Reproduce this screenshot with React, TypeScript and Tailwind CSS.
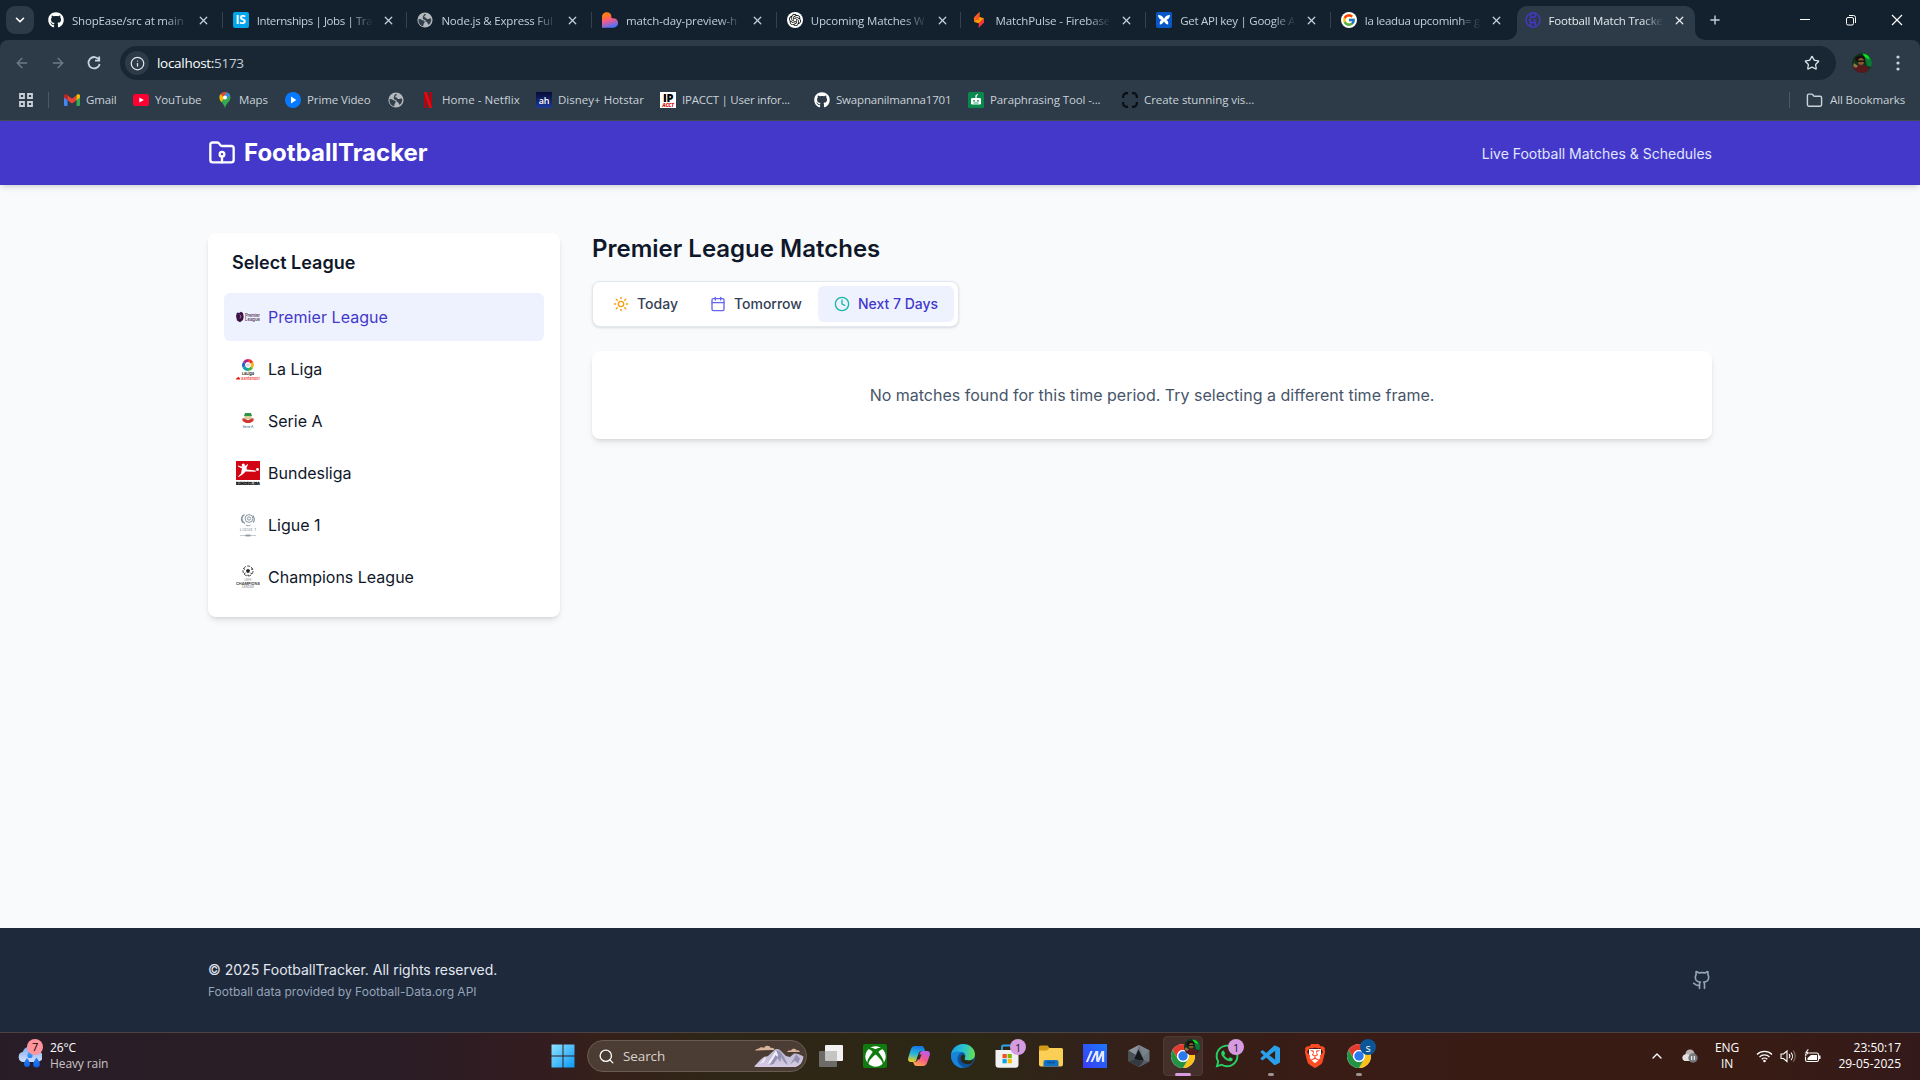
import React from "react";
import {
  FolderRoot,
  Sun,
  Calendar,
  Clock,
  Github,
  ChevronDown,
  X,
  Plus,
  ArrowLeft,
  ArrowRight,
  Info,
  Star,
  Folder,
  Search,
  ChevronUp,
} from "lucide-react";
import { FaGithub, FaXbox, FaWhatsapp } from "react-icons/fa";
import { FcGoogle } from "react-icons/fc";
import { SiOpenai, SiBrave } from "react-icons/si";
import { VscVscode } from "react-icons/vsc";

/* ---------- small drawings ---------- */

const Globe = () => (
  <svg viewBox="0 0 16 16" className="h-4 w-4">
    <circle cx="8" cy="8" r="7.6" fill="#b4b8bc" />
    <path d="M1.600 7C4 6.500 5 8 6.500 8.500c1.600.6 1.400 2 .4 2.900-.6.700-.3 1.900-.9 3A6.800 6.800 0 0 1 1.600 7zM8 1.700c1.500.8.5 1.600-.3 2-.8.500-.6 1.500.5 1.700 1.500.2 1 1.700 2.600 1.700 1.200 0 1.500-.8 3.300-.4a6.500 6.500 0 0 1-2.300 6c-1.300-.2-.8-2-2-2.600C8.500 9.500 8 8.800 8.500 7.900 6.500 8 5.500 6.800 5.800 5.500 6 4 6.500 2.500 8 1.700z" fill="#33404c" />
  </svg>
);

const Internshala = () => (
  <div className="flex h-4 w-4 items-center justify-center rounded-[2px] bg-[#00a5ec] text-[12px] font-bold leading-none text-white">IS</div>
);

const Lovable = () => (
  <svg viewBox="0 0 16 16" className="h-4 w-4">
    <defs>
      <linearGradient id="lov" x1="0.2" y1="0" x2="0.5" y2="1">
        <stop offset="0.2" stopColor="#ff7a1a" />
        <stop offset="0.5" stopColor="#ff5a80" />
        <stop offset="1" stopColor="#4b73ff" />
      </linearGradient>
    </defs>
    <path d="M4.800.3C7.500.3 9.500 2.300 9.500 5v1.200h1.800a4.700 4.700 0 0 1 0 9.500H0V5C0 2.300 2.100.3 4.800.3z" fill="url(#lov)" />
  </svg>
);

const OpenAi = () => (
  <div className="flex h-4 w-4 items-center justify-center rounded-full bg-white">
    <SiOpenai className="h-3 w-3 text-black" />
  </div>
);

const FirebaseStudio = () => (
  <svg viewBox="0 0 16 16" className="h-4 w-4">
    <path d="M8.500 0 3 5.500V10l5.500-5z" fill="#ff7a1a" />
    <path d="M8.500 5 3 10l5 1.200 5-5z" fill="#ffa000" />
    <path d="m3 5.500 5 3V4.500L8.500 0z" fill="#ff5226" />
    <path d="m8 11.200 5-5v4.300L7.500 16z" fill="#ff3340" />
  </svg>
);

const ApiKey = () => (
  <svg viewBox="0 0 16 16" className="h-4 w-4">
    <rect width="16" height="16" rx="2" fill="#0757c9" />
    <path d="M2 3c3 0 5 1.500 6 4 1-2.500 3-4 6-4-.2 2.600-1.500 4.400-3.800 5 1.700.5 2.300 2 2 4.500-2-.3-3.500-1.400-4.200-3.300-.7 1.900-2.200 3-4.200 3.300-.3-2.500.3-4 2-4.500C3.500 7.400 2.200 5.600 2 3z" fill="#fff" />
  </svg>
);

const GoogleDisc = () => (
  <div className="flex h-4 w-4 items-center justify-center rounded-full bg-white">
    <FcGoogle className="h-[14px] w-[14px]" />
  </div>
);

const BallIcon = () => (
  <svg viewBox="0 0 16 16" className="h-4 w-4" fill="none" stroke="#4636cf" strokeWidth="1.300">
    <circle cx="8" cy="8" r="7" />
    <path d="M5.500 2.200 6 5h4l.5-2.800M6 5 4.500 8 6 10.500h4V8.500L8.500 7M6 10.500l-.8 3.300M10 10.500l.8 3.300" />
  </svg>
);

const Gmail = () => (
  <svg viewBox="0 0 16 12" className="h-3 w-4">
    <path d="M0 1.500V11a1 1 0 0 0 1 1h2.500V4z" fill="#4285f4" />
    <path d="M16 1.500V11a1 1 0 0 1-1 1h-2.500V4z" fill="#34a853" />
    <path d="M3.500 1.200v5L8 9.500l4.500-3.300v-5L8 4.700z" fill="#ea4335" />
    <path d="M0 1.700v1.900l3.500 2.600v-5L2.800.6C1.600-.3 0 .5 0 1.700z" fill="#c5221f" />
    <path d="M16 1.700v1.900l-3.500 2.600v-5l.7-.6C14.400-.3 16 .5 16 1.700z" fill="#fbbc04" />
  </svg>
);

const YouTube = () => (
  <svg viewBox="0 0 16 12" className="h-3 w-4">
    <rect width="16" height="12" rx="2.800" fill="#ff0033" />
    <path d="M6.300 3.400v5.200L10.800 6z" fill="#fff" />
  </svg>
);

const MapsPin = () => (
  <svg viewBox="0 0 12 16" className="h-4 w-3">
    <path d="M6 0a5.500 5.500 0 0 1 5.500 5.500C11.500 9.500 7.500 10.500 6 16 4.500 10.500.5 9.500.5 5.500A5.500 5.500 0 0 1 6 0z" fill="#34a853" />
    <path d="M1.800 2 6 5.500 2.300 10C1.200 8.700.5 7.500.5 5.500.5 4.100 1 3 1.800 2z" fill="#fbbc04" />
    <path d="M1.800 2A5.500 5.500 0 0 1 6 0c1 0 1.400.2 1.800.3L4 5z" fill="#ea4335" />
    <path d="M7.800.3a5.600 5.600 0 0 1 3.200 3L7.500 7 6 4z" fill="#4285f4" />
    <circle cx="6" cy="5.500" r="2" fill="#fff" />
  </svg>
);

const PrimeVideo = () => (
  <svg viewBox="0 0 16 16" className="h-4 w-4">
    <circle cx="8" cy="8" r="8" fill="#0779ff" />
    <path d="M6 4.600v6.800L11.300 8z" fill="#fff" />
  </svg>
);

const Netflix = () => (
  <svg viewBox="0 0 16 16" className="h-4 w-4">
    <path d="M4 0h2.800v16H4zM9.200 0H12v16H9.200z" fill="#b1060f" />
    <path d="M4 0h2.800L12 16H9.200z" fill="#e50914" />
  </svg>
);

const Hotstar = () => (
  <div className="flex h-4 w-4 items-center justify-center bg-linear-to-b from-[#060b34] to-[#1b3c9c] text-[9px] font-semibold leading-none tracking-[-0.300px] text-white">ah</div>
);

const IpAcct = () => (
  <div className="flex h-4 w-4 flex-col items-center bg-white">
    <span className="text-[11px] font-black leading-[11px] tracking-[-0.5px] text-black">IP</span>
    <span className="text-[5px] font-black italic leading-[5px] text-[#e01010]">ACCT</span>
  </div>
);

const QuillBot = () => (
  <svg viewBox="0 0 16 16" className="h-4 w-4">
    <rect width="16" height="16" rx="1.500" fill="#07884d" />
    <path d="M7.400 6V3.500L9.600 1.800l.4 1-1.300 1.200V6z" fill="#fff" />
    <rect x="3" y="6" width="10" height="6.500" rx="1.200" fill="#fff" />
    <circle cx="6" cy="8.800" r=".9" fill="#07884d" />
    <circle cx="10" cy="8.800" r=".9" fill="#07884d" />
    <path d="M5.500 11h5" stroke="#07884d" strokeWidth=".8" />
  </svg>
);

const Brackets = () => (
  <svg viewBox="0 0 16 16" className="h-4 w-4" fill="none" stroke="#0b0d10" strokeWidth="2.200">
    <path d="M6 1.200H4.500A3.300 3.300 0 0 0 1.200 4.500V6M10 1.200h1.500a3.300 3.300 0 0 1 3.300 3.300V6M6 14.800H4.500a3.300 3.300 0 0 1-3.300-3.300V10M10 14.800h1.500a3.300 3.300 0 0 0 3.300-3.300V10" />
  </svg>
);

const Avatar = ({ className }: { className: string }) => (
  <svg viewBox="0 0 20 20" className={className}>
    <clipPath id="av"><circle cx="10" cy="10" r="10" /></clipPath>
    <g clipPath="url(#av)">
      <rect width="20" height="20" fill="#12301c" />
      <path d="M10 0h10v14l-5-1-2-8z" fill="#0b7a35" />
      <path d="M11 1.500c3-1 6 1.500 6.500 5l-4-2z" fill="#0bea1d" />
      <path d="M3 6c0-4 9-5 10-1l-1 3H4z" fill="#15100f" />
      <ellipse cx="9" cy="8.500" rx="3" ry="3.500" fill="#8a5a2c" />
      <path d="M5 7.500h8v1.400H5z" fill="#17110f" />
      <path d="M0 14c5-3 13-3 17 1l-2 5H2z" fill="#571a1c" />
      <path d="m2 10 4 3-2 2-3-2z" fill="#8b7a43" />
    </g>
  </svg>
);

const Chrome = () => (
  <svg viewBox="0 0 24 24" className="h-6 w-6">
    <circle cx="12" cy="12" r="12" fill="#fff" />
    <path d="M1.610 6A12 12 0 0 1 22.390 6H12a6 6 0 0 0-5.200 9z" fill="#e33b2e" />
    <path d="M22.390 6A12 12 0 0 1 12 24l5.200-9A6 6 0 0 0 12 6z" fill="#fbc116" />
    <path d="M12 24A12 12 0 0 1 1.610 6l5.190 9A6 6 0 0 0 17.200 15z" fill="#229342" />
    <circle cx="12" cy="12" r="5.900" fill="#fff" />
    <circle cx="12" cy="12" r="4.700" fill="#2b79ee" />
  </svg>
);

const Windows = () => (
  <svg viewBox="0 0 24 24" className="h-6 w-6">
    <defs>
      <linearGradient id="win" x1="0" y1="0" x2="1" y2="1">
        <stop offset="0" stopColor="#8fe3ff" />
        <stop offset="1" stopColor="#0a99f5" />
      </linearGradient>
    </defs>
    <path d="M.5.500h11v11H.5zM12.500.500h11v11h-11zM.5 12.500h11v11H.5zM12.500 12.500h11v11h-11z" fill="url(#win)" />
  </svg>
);

const Mountains = () => (
  <svg viewBox="0 0 50 24" className="h-6 w-[50px]">
    <defs>
      <linearGradient id="mt" x1="0" y1="0" x2="0" y2="1">
        <stop offset="0" stopColor="#b3b5ca" />
        <stop offset="1" stopColor="#d9cbe6" />
      </linearGradient>
    </defs>
    <path d="M0 22.500C4 19 7 14 11 12.500c2 0 3 0 4-1.500l6-5.500c2-1 4-.5 6 1.500l5 5 4 1 4-3.500c3-.5 7 1.500 9.500 3-1 6-3 9-8 10.500H3z" fill="url(#mt)" />
    <path d="m22 6-1.500 7-5 8 4-1 4-6 3 4 .5-5 4 6 3 2-4-8-4-5.500zM42 10.500l-2 4-4 6 5-4 3 3 2-5z" fill="#9390b3" />
    <path d="m22 6-3.500 6-5 8 3-1 5-8 2 2 .5-2zM11 13l-5 7 4-2 2-4z" fill="#f0eef8" />
    <path d="M1 6.500C2 4.500 4 5 5 4.500 6 3 9 3 10 4c1-3 6-3 6.500 0 2-.5 4 .5 4 2z" fill="#d9b49c" />
    <path d="M33 8c1-2 3-1.500 4-1.500C38 4 42 4.500 42.500 6.500c1-.5 3 0 3.500 1.500z" fill="#d9b49c" />
  </svg>
);

const TaskView = () => (
  <svg viewBox="0 0 24 24" className="h-6 w-6">
    <rect x="6" y="1" width="18" height="16" rx="1" fill="#f2f2f2" />
    <rect x="0" y="7" width="18" height="16" rx="1" fill="#6c6b68" />
    <path d="M6 7h12v10H7a1 1 0 0 1-1-1z" fill="#c4c4c2" />
  </svg>
);

const Copilot = () => (
  <svg viewBox="0 0 24 24" className="h-6 w-6">
    <defs>
      <linearGradient id="cp1" x1="0.5" y1="0" x2="0.3" y2="1">
        <stop offset="0" stopColor="#1377e8" />
        <stop offset="0.5" stopColor="#27b6d8" />
        <stop offset="1" stopColor="#f4cf1c" />
      </linearGradient>
      <linearGradient id="cp2" x1="0.8" y1="0" x2="0.3" y2="1">
        <stop offset="0" stopColor="#b65cf2" />
        <stop offset="0.5" stopColor="#f2588f" />
        <stop offset="1" stopColor="#ffa24a" />
      </linearGradient>
    </defs>
    <path d="M8 2h6.500c2 0 2.500 1.500 3 3l.5 2h-3c-2 0-3 1-3.500 3l-1.600 5c-.5 2-1.400 3-3.400 3H4c-2.500 0-3.500-2-2.700-4.500l2.700-8.500C4.800 3 6 2 8 2z" fill="url(#cp1)" />
    <path d="M16 22H9.500c-2 0-2.500-1.500-3-3L6 18h1.500c2 0 3-1 3.500-3l1.600-5c.5-2 1.400-3 3.400-3h4c2.500 0 3.500 2 2.700 4.500L20 19c-.8 2-2 3-4 3z" fill="url(#cp2)" />
    <path d="m11.500 10.500 3 0-2 5h-3z" fill="#2e2616" />
  </svg>
);

const Edge = () => (
  <svg viewBox="0 0 24 24" className="h-6 w-6">
    <defs>
      <linearGradient id="ed1" x1="0" y1="0.3" x2="1" y2="0.4">
        <stop offset="0" stopColor="#1b9ce0" />
        <stop offset="0.55" stopColor="#2cc3cf" />
        <stop offset="1" stopColor="#66e04b" />
      </linearGradient>
    </defs>
    <circle cx="12" cy="12" r="12" fill="#0c59a4" />
    <path d="M0 11C.5 5 5.500 0 12 0c7 0 12 5 12 10.500 0 3.500-3 6-6.500 6-3 0-4.500-1-4-2 1.500-2 1.500-6-3.500-6.500C6 7.500 1.500 8.500 0 11z" fill="url(#ed1)" />
    <path d="M0 11c2-3.500 8-4.500 11-2-4 0-5.500 5-4 9 1 2.600 3.500 5 6 5.900A12 12 0 0 1 0 11z" fill="#1784d8" />
    <path d="M13.500 14.500c-.5 1 1 2 4 2 2 0 4.500-.5 5.500-2-.7 2-1.500 3.800-3 5.200-6 2-11-1.500-10.500-6 .2-1.700 1.500-3 2.500-3 2 .5 2.500 2.300 1.500 3.800z" fill="#2e2715" />
    <path d="M9.500 13.700C9 18.200 14 21.700 20 19.700 16 24 8 22 7.500 16c0-1.500.5-3 2-2.300z" fill="#0f4f99" />
  </svg>
);

const Store = () => (
  <svg viewBox="0 0 24 24" className="h-6 w-6">
    <path d="M7 6V3a1.500 1.500 0 0 1 1.500-1.500h7A1.500 1.500 0 0 1 17 3v3" fill="none" stroke="#2aa5e8" strokeWidth="1.800" />
    <path d="M.5 6h23v14.500a3.300 3.300 0 0 1-3.300 3.300H3.800A3.300 3.300 0 0 1 .5 20.500z" fill="#f1f1f1" />
    <path d="M7.500 10h4.200v4.200H7.500z" fill="#f25022" />
    <path d="M12.600 10h4.200v4.200h-4.200z" fill="#7fba00" />
    <path d="M7.500 15.100h4.200v4.200H7.500z" fill="#00a4ef" />
    <path d="M12.600 15.100h4.200v4.200h-4.200z" fill="#ffb900" />
  </svg>
);

const Explorer = () => (
  <svg viewBox="0 0 24 24" className="h-6 w-6">
    <path d="M0 3a1.500 1.500 0 0 1 1.500-1.500h7L11 4.500V8H0z" fill="#d39a17" />
    <path d="M0 6.500h8L10.500 4H22.500A1.500 1.500 0 0 1 24 5.500v15A2 2 0 0 1 22 22.500H2a2 2 0 0 1-2-2z" fill="#fbcf55" />
    <path d="M4.500 22.500V18A2 2 0 0 1 6.500 16h11a2 2 0 0 1 2 2v4.500z" fill="#1273c4" />
    <path d="M8 18.500h8" stroke="#0d4f91" strokeWidth="1.500" />
  </svg>
);

const MyAsus = () => (
  <svg viewBox="0 0 24 24" className="h-6 w-6">
    <defs>
      <linearGradient id="as" x1="0" y1="1" x2="1" y2="0">
        <stop offset="0" stopColor="#3a3cf5" />
        <stop offset="1" stopColor="#1c77fb" />
      </linearGradient>
    </defs>
    <rect width="24" height="24" fill="url(#as)" />
    <path d="m7.500 7 2.200 0L5 18H2.800zM12.500 7h2.800v8l-2.200 3V10.500L9.700 18H7.500zM18.500 7h2.700v11h-2.300v-6.500L16 18h-2.300z" fill="#e3e9ff" />
  </svg>
);

const HexCrystal = () => (
  <svg viewBox="0 0 24 24" className="h-6 w-6">
    <path d="m12 1 10.500 5.500v11L12 23 1.500 17.500v-11z" fill="#6d747b" />
    <path d="M12 1 1.500 6.500 8 12z" fill="#8d959c" />
    <path d="m12 1 10.500 5.500L16 13z" fill="#7a828a" />
    <path d="M1.500 6.500v11L7 15.500 9 11z" fill="#4a5157" />
    <path d="M11.500 5.500 7 15.500l10 1z" fill="#14181c" />
    <path d="m12 23 10.500-5.500-5.500-1z" fill="#555c63" />
    <path d="M12 23 1.500 17.500 7 15.500l10 1z" fill="#343a40" />
  </svg>
);

const WeatherIcon = () => (
  <svg viewBox="0 0 24 24" className="h-6 w-6">
    <defs>
      <linearGradient id="wc" x1="0" y1="0" x2="0" y2="1">
        <stop offset="0" stopColor="#7fa9f0" />
        <stop offset="1" stopColor="#d3e0fb" />
      </linearGradient>
      <linearGradient id="wd" x1="0" y1="0" x2="0" y2="1">
        <stop offset="0" stopColor="#43a2ff" />
        <stop offset="1" stopColor="#0a5fe8" />
      </linearGradient>
    </defs>
    <path d="M5.500 17a5 5 0 0 1-.8-9.900A8 8 0 0 1 19.500 6a5.500 5.500 0 0 1-.5 11z" fill="url(#wc)" />
    <path d="M12 5.500c2 2.500 2.600 4 2.600 5a2.600 2.600 0 0 1-5.200 0c0-1 .6-2.500 2.600-5zM9 13c2.200 3 3 4.600 3 6a3 3 0 0 1-6 0c0-1.400.8-3 3-6zM18.500 12.500c2.500 3.300 3.300 5 3.300 6.700a3.300 3.300 0 0 1-6.600 0c0-1.700.8-3.400 3.300-6.700z" fill="url(#wd)" />
  </svg>
);

/* ---------- browser chrome ---------- */

const tabs = [
  { icon: <FaGithub className="h-4 w-4 text-white" />, label: "ShopEase/src at main" },
  { icon: <Internshala />, label: "Internships | Jobs | Tra", fit: "tracking-[-0.400px]" },
  { icon: <Globe />, label: "Node.js & Express Ful" },
  { icon: <Lovable />, label: "match-day-preview-h", fit: "tracking-[-0.120px]" },
  { icon: <OpenAi />, label: "Upcoming Matches W", fit: "tracking-[-0.160px]" },
  { icon: <FirebaseStudio />, label: "MatchPulse - Firebase", fit: "tracking-[-0.120px]" },
  { icon: <ApiKey />, label: "Get API key | Google A", fit: "tracking-[-0.260px]" },
  { icon: <GoogleDisc />, label: "la leadua upcominh= g", fit: "tracking-[-0.300px]" },
];

const TabStrip = () => (
  <div className="flex h-10 bg-[#12212d] text-[#c3d0da]">
    <div className="ml-[6px] mt-[6px] flex h-7 w-7 shrink-0 items-center justify-center rounded-[9px] bg-[#2d3b48]">
      <ChevronDown className="h-3.5 w-3.5 text-white" strokeWidth={2.8} />
    </div>
    <div className="ml-1 flex">
      {tabs.map((t, i) => (
        <div key={i} className="flex w-[184.700px] shrink-0 items-center pl-[10px]">
          <div className="shrink-0">{t.icon}</div>
          <div className={"ml-[8px] mt-px w-[116px] shrink-0 overflow-hidden whitespace-nowrap text-[11.500px] [mask-image:linear-gradient(to_right,black_80%,transparent_100%)] " + (t.fit ?? "tracking-[-0.190px]")}>{t.label}</div>
          <X className="ml-[9px] h-[13px] w-[13px] shrink-0" strokeWidth={2.4} />
          <div className={i < 7 ? "ml-auto h-4 w-px bg-[#33424f]" : "hidden"} />
        </div>
      ))}
    </div>
    <div className="flex">
      <svg viewBox="0 0 10 10" className="-ml-[9px] h-[10px] w-[10px] self-end fill-[#2d3b48]"><path d="M10 0v10H0A10 10 0 0 0 10 0z" /></svg>
      <div className="mt-[6px] flex h-[34px] w-[178px] items-center rounded-t-[10px] bg-[#2d3b48] pb-[6px] pl-[8px] text-[#e4eaee]">
        <BallIcon />
        <div className="ml-[8px] mt-px w-[114px] overflow-hidden whitespace-nowrap text-[11.500px] tracking-[-0.170px] [mask-image:linear-gradient(to_right,black_82%,transparent_100%)]">Football Match Tracke</div>
        <X className="ml-[10px] h-[13px] w-[13px] shrink-0" strokeWidth={2.4} />
      </div>
      <svg viewBox="0 0 10 10" className="h-[10px] w-[10px] self-end fill-[#2d3b48]"><path d="M0 0v10h10A10 10 0 0 1 0 0z" /></svg>
    </div>
    <Plus className="ml-[3px] mt-[13px] h-[14px] w-[14px]" strokeWidth={2.4} />
    <div className="ml-auto mt-[14px] flex gap-[34px] pr-[17px] text-white">
      <svg viewBox="0 0 12 12" className="h-3 w-3" stroke="currentColor" fill="none"><path d="M1 5.500h10" /></svg>
      <svg viewBox="0 0 12 12" className="h-3 w-3" stroke="currentColor" fill="none"><rect x="1.500" y="3.500" width="7" height="7.500" rx="1.500" /><path d="M4 1.500h4.500a2 2 0 0 1 2 2V9" /></svg>
      <svg viewBox="0 0 12 12" className="h-3 w-3" stroke="currentColor" fill="none" strokeWidth="1.200"><path d="m1 1 10 10M11 1 1 11" /></svg>
    </div>
  </div>
);

const Toolbar = () => (
  <div className="h-[43px] rounded-t-[8px] bg-[#2d3b48]">
    <div className="flex h-[46px] items-center">
      <ArrowLeft className="ml-[14px] h-4 w-4 text-[#6f7c87]" />
      <ArrowRight className="ml-[20px] h-4 w-4 text-[#6f7c87]" />
      <svg viewBox="0 0 16 16" className="ml-[20px] h-4 w-4" fill="none" stroke="#c8d5df" strokeWidth="1.800">
        <path d="M13 4.700A5.700 5.700 0 1 0 13.700 9" />
        <path d="M13.200 1.500v4.200H9" />
      </svg>
      <div className="ml-[18px] flex h-[34px] w-[1716px] items-center rounded-full bg-[#182733] pl-[5px] pr-[16px]">
        <div className="flex h-6 w-6 items-center justify-center rounded-full bg-[#2d3b48]">
          <Info className="h-[15px] w-[15px] text-[#dfe7ec]" />
        </div>
        <div className="ml-2 text-[13.500px] tracking-[-0.300px] text-[#c5cfd6]"><span className="text-white">localhost:</span>5173</div>
        <Star className="ml-auto h-4 w-4 text-[#dbe4ea]" strokeWidth={1.900} />
      </div>
      <Avatar className="ml-[16px] h-5 w-5" />
      <svg viewBox="0 0 4 16" className="ml-[24px] h-4 w-1 fill-[#c8d5df]"><circle cx="2" cy="2" r="1.600" /><circle cx="2" cy="8" r="1.600" /><circle cx="2" cy="14" r="1.600" /></svg>
    </div>
  </div>
);

const Bookmark = ({ w, icon, label }: { w: string; icon: React.ReactNode; label?: string }) => (
  <div className={"flex shrink-0 items-center whitespace-nowrap " + w}>
    <div className="flex w-4 shrink-0 justify-center">{icon}</div>
    <span className="ml-[6px]">{label}</span>
  </div>
);

const BookmarksBar = () => (
  <div className="flex h-[38px] items-center border-b border-[#454b52] bg-[#2d3b48] pb-[3px] pl-[19px] text-[11.500px] tracking-[-0.120px] text-[#c9d2d9]">
    <svg viewBox="0 0 14 14" className="h-[14px] w-[14px]" fill="none" stroke="#c8d0d6" strokeWidth="1.800"><path d="M1 1h4v4H1zM9 1h4v4H9zM1 9h4v4H1zM9 9h4v4H9z" /></svg>
    <div className="ml-[15px] mr-[15px] h-4 w-px bg-[#4a5966]" />
    <Bookmark w="w-[69px]" icon={<Gmail />} label="Gmail" />
    <Bookmark w="w-[84px]" icon={<YouTube />} label="YouTube" />
    <Bookmark w="w-[68px]" icon={<MapsPin />} label="Maps" />
    <Bookmark w="w-[103px]" icon={<PrimeVideo />} label="Prime Video" />
    <Bookmark w="w-[32px]" icon={<Globe />} />
    <Bookmark w="w-[116px] tracking-[0.050px]" icon={<Netflix />} label="Home - Netflix" />
    <Bookmark w="w-[124px] tracking-[0.010px]" icon={<Hotstar />} label="Disney+ Hotstar" />
    <Bookmark w="w-[154px] tracking-[-0.240px]" icon={<IpAcct />} label="IPACCT | User infor..." />
    <Bookmark w="w-[154px] tracking-[-0.190px]" icon={<FaGithub className="h-4 w-4 text-white" />} label="Swapnanilmanna1701" />
    <Bookmark w="w-[154px]" icon={<QuillBot />} label="Paraphrasing Tool -..." />
    <Bookmark w="w-[154px] tracking-[-0.060px]" icon={<Brackets />} label="Create stunning vis..." />
    <div className="ml-auto mr-[16px] h-4 w-px bg-[#4a5966]" />
    <Folder className="h-[17px] w-[17px]" strokeWidth={2} />
    <span className="ml-[7px] w-[90px] whitespace-nowrap">All Bookmarks</span>
  </div>
);

/* ---------- league logos ---------- */

const PremierLogo = () => (
  <svg viewBox="0 0 24 24" className="h-6 w-6">
    <path d="M1 7.500 3 8l2-1.200L7 8l.7 4-.7 3-3 2.200L1 15.500 0 11z" fill="#3d1145" />
    <path d="M3.500 9.500 5 11l-1 2.500" stroke="#b49bb8" strokeWidth=".7" fill="none" />
    <text x="9" y="11.600" fontSize="4.200" fontWeight="600" fill="#5b3a62" textLength="15">Premier</text>
    <text x="9" y="15.800" fontSize="4.200" fontWeight="600" fill="#5b3a62" textLength="15">League</text>
  </svg>
);

const LaLigaLogo = () => (
  <svg viewBox="0 0 24 24" className="h-6 w-6">
    <g fill="none" strokeWidth="3">
      <path d="M12 3.500a4.500 4.500 0 0 1 4 2.500" stroke="#ef3b2d" />
      <path d="M16 6a4.500 4.500 0 0 1-.3 4.500" stroke="#f7b51b" />
      <path d="M15.700 10.500a4.500 4.500 0 0 1-3.700 2" stroke="#45b14a" />
      <path d="M12 12.500a4.500 4.500 0 0 1-4-2.500" stroke="#17a0a8" />
      <path d="M8 10a4.500 4.500 0 0 1 .3-4.500" stroke="#2c62c4" />
      <path d="M8.300 5.500a4.500 4.500 0 0 1 3.700-2" stroke="#b0208a" />
    </g>
    <circle cx="12" cy="8" r="1.800" fill="#d9d9d9" />
    <text x="6" y="18.300" fontSize="4" fontWeight="700" fill="#333" textLength="12">LaLiga</text>
    <path d="M0 22.500c0-2 2-1 2-3 1 1 2.200 1.500 2.200 3z" fill="#e11" />
    <text x="5" y="22.500" fontSize="3.800" fontWeight="600" fill="#f04646" textLength="19">Santander</text>
  </svg>
);

const SerieALogo = () => (
  <svg viewBox="0 0 24 24" className="h-6 w-6">
    <path d="M9 4h6l1 3H8z" fill="#2f9445" />
    <path d="M8.500 7h7l.5 3H8z" fill="#d7cf9b" />
    <path d="M6.500 9 12 11l5.500-2v3L14 14h-4l-3.500-2z" fill="#cb3b34" />
    <text x="6.500" y="19.300" fontSize="3.400" fontWeight="500" fill="#53708f" textLength="11">Serie A</text>
  </svg>
);

const BundesligaLogo = () => (
  <svg viewBox="0 0 24 24" className="h-6 w-6">
    <rect width="24" height="19" fill="#d20515" />
    <circle cx="7.300" cy="4" r="1.600" fill="#fff" />
    <circle cx="21.500" cy="8.500" r="1.400" fill="#fff" />
    <path d="m2 4.500 3.500 1L10 4.500 11.500 3l.5.600L10.500 7l.3 1.500 9 1-.2 1.200-10-.2-3 3-4 2.500L2 15.500l3-3L6 7.500 2 5.500z" fill="#fff" />
    <text x="0" y="24" fontSize="4" fontWeight="900" fill="#111" stroke="#111" strokeWidth=".3" textLength="24" lengthAdjust="spacingAndGlyphs">BUNDESLIGA</text>
  </svg>
);

const LigueLogo = () => (
  <svg viewBox="0 0 24 24" className="h-6 w-6" fill="none" stroke="#8997a3">
    <path d="M8.500 1.500C5 4 5 8 9 10.500M7 2.500c-2.500 3-2 5 0 7M17 2.500c1.800 3 1.500 5.500 0 7" strokeWidth="1.200" />
    <circle cx="13" cy="5.500" r="3.900" />
    <circle cx="13" cy="5.500" r="1.600" />
    <path d="M10 12c1.500 1 3 1 4.500 0" />
    <text x="4" y="18" fontSize="3.500" fontWeight="500" fill="#6e7d8a" stroke="none" textLength="16">LIGUE 1</text>
    <path d="M4 22.500h16" strokeWidth=".5" />
    <path d="M9.500 22.500h5" strokeWidth="1.800" />
  </svg>
);

const ChampionsLogo = () => (
  <svg viewBox="0 0 24 24" className="h-6 w-6">
    <circle cx="12" cy="6" r="5" fill="#fff" stroke="#4c4c4c" strokeWidth="1" strokeDasharray="3.200 1.200" />
    <path d="m12 3.800 2 1.500-.8 2.400h-2.400L10 5.300z" fill="#222" />
    <path d="m7.500 3.500 1.500 1M16.500 3.500l-1.500 1M8 9l1.500-1M16 9l-1.500-1M12 11V9.500" stroke="#333" strokeWidth="1" />
    <text x="8.500" y="15.500" fontSize="3" fill="#888" textLength="7">UEFA</text>
    <text x="0" y="19.600" fontSize="3.700" fontWeight="600" fill="#333" textLength="24" lengthAdjust="spacingAndGlyphs">CHAMPIONS</text>
    <text x="6" y="23.400" fontSize="3" fill="#666" textLength="12">LEAGUE</text>
  </svg>
);

const leagues = [
  { name: "Premier League", logo: <PremierLogo /> },
  { name: "La Liga", logo: <LaLigaLogo /> },
  { name: "Serie A", logo: <SerieALogo /> },
  { name: "Bundesliga", logo: <BundesligaLogo /> },
  { name: "Ligue 1", logo: <LigueLogo /> },
  { name: "Champions League", logo: <ChampionsLogo /> },
];

const periods = [
  { name: "Today", icon: <Sun className="h-4 w-4 text-[#f59e0b]" /> },
  { name: "Tomorrow", icon: <Calendar className="h-4 w-4 text-[#6366f1]" /> },
  { name: "Next 7 Days", icon: <Clock className="h-4 w-4 text-[#14b8a6]" /> },
];

const Site = () => (
  <div className="flex h-[911px] flex-col bg-[#f8fafc] font-['Inter',sans-serif] text-[#0f172a]">
    <header className="z-10 h-16 shrink-0 bg-[#4338ca] shadow-md">
      <div className="mx-auto flex h-full w-[1504px] items-center justify-between">
        <div className="flex items-center gap-2 text-white">
          <FolderRoot className="h-7 w-7" />
          <h1 className="text-2xl font-bold">FootballTracker</h1>
        </div>
        <p className="mt-[2px] text-sm text-[#e0e7ff]">Live Football Matches &amp; Schedules</p>
      </div>
    </header>
    <main className="mx-auto flex w-[1504px] grow items-start gap-8 pt-12">
      <aside className="w-[352px] rounded-lg bg-white p-4 shadow-md">
        <h2 className="mb-4 px-2 text-lg font-semibold">Select League</h2>
        <div className="flex flex-col gap-1">
          {leagues.map((l, i) => (
            <button
              key={l.name}
              className={
                i === 0
                  ? "flex h-12 items-center gap-2 rounded-md bg-[#eef2ff] px-3 text-[#4338ca]"
                  : "flex h-12 items-center gap-2 rounded-md px-3"
              }
            >
              {l.logo}
              <span className={i === 0 ? "tracking-[0.060px]" : ""}>{l.name}</span>
            </button>
          ))}
        </div>
      </aside>
      <section className="grow">
        <h2 className="mb-4 text-2xl font-semibold">Premier League Matches</h2>
        <div className="inline-flex rounded-lg border border-[#e2e8f0] bg-white p-1 align-top shadow-sm">
          {periods.map((p, i) => (
            <button
              key={p.name}
              className={
                i === 2
                  ? "flex items-center gap-2 rounded-md bg-[#eef2ff] px-4 py-2 text-sm font-medium text-[#4338ca]"
                  : "flex items-center gap-2 rounded-md px-4 py-2 text-sm font-medium text-[#334155]"
              }
            >
              {p.icon}
              {p.name}
            </button>
          ))}
        </div>
        <div className="mt-6 rounded-lg bg-white p-8 text-center text-[#475569] shadow-md">
          No matches found for this time period. Try selecting a different time frame.
        </div>
      </section>
    </main>
    <footer className="h-[104px] shrink-0 bg-[#1e293b]">
      <div className="mx-auto flex h-full w-[1504px] items-center justify-between">
        <div>
          <p className="text-sm text-[#e2e8f0]">© 2025 FootballTracker. All rights reserved.</p>
          <p className="mt-1 text-xs text-[#94a3b8]">Football data provided by Football-Data.org API</p>
        </div>
        <Github className="h-5 w-5 text-[#94a3b8]" />
      </div>
    </footer>
  </div>
);

/* ---------- taskbar ---------- */

const Badge = ({ children, className }: { children?: React.ReactNode; className: string }) => (
  <div className={"absolute flex h-4 w-4 items-center justify-center rounded-full text-[11px] leading-none " + className}>{children}</div>
);

const ones = "-right-[7px] -top-[5px] bg-[#d69be0] text-[#2a1a2c]";

const apps = [
  { icon: <TaskView /> },
  { icon: <div className="flex h-6 w-6 items-center justify-center rounded-[2px] bg-[#107c10]"><FaXbox className="h-[21px] w-[21px] text-white" /></div> },
  { icon: <Copilot /> },
  { icon: <Edge /> },
  { icon: <Store />, badge: <Badge className={ones}>1</Badge> },
  { icon: <Explorer /> },
  { icon: <MyAsus /> },
  { icon: <HexCrystal /> },
  { icon: <Chrome />, badge: <Badge className="-right-[5px] -top-[5px]"><Avatar className="h-4 w-4" /></Badge>, active: true },
  { icon: <FaWhatsapp className="h-[26px] w-[26px] text-[#25d366]" />, badge: <Badge className="-right-[5px] -top-[5px] bg-[#d69be0] text-[#2a1a2c]">1</Badge> },
  { icon: <VscVscode className="h-6 w-6 text-[#2ba0ea]" />, running: true },
  { icon: <div className="relative flex h-6 w-6 items-center justify-center"><div className="absolute h-3.5 w-3 bg-white" /><SiBrave className="relative h-6 w-6 text-[#fb4b22]" /></div> },
  { icon: <Chrome />, badge: <Badge className="-right-[5px] -top-[5px] bg-[#0b5596] text-white">s</Badge>, running: true },
];

const Taskbar = () => (
  <div className="flex h-12 items-center border-t border-[#4b4243] bg-[linear-gradient(to_right,#281d26_0px,#2a1d26_380px,#331c20_540px,#35201a_600px,#2e2616_720px,#2d2716_980px,#33211a_1100px,#381c15_1300px,#381c14_1750px,#33191a_1920px)] pb-px text-[12px] tracking-[-0.100px] text-white">
    <div className="relative ml-[18px] mt-px">
      <WeatherIcon />
      <Badge className="-top-[6px] left-[9px] bg-[#ff949c] text-black">7</Badge>
    </div>
    <div className="ml-[8px] w-[117px] leading-4">
      <div>26°C</div>
      <div className="text-[#c9c4c7]">Heavy rain</div>
    </div>
    <div className="ml-[384px]"><Windows /></div>
    <div className="ml-[12px] flex h-8 w-[220px] items-center rounded-full border border-[#695b51] bg-[#4b3d34] pl-[10px]">
      <Search className="h-[17px] w-[17px] text-white" strokeWidth={1.800} />
      <span className="ml-[8px] text-[13.500px] tracking-[-0.100px] text-[#d8d2ce]">Search</span>
      <div className="ml-auto mr-[2px]"><Mountains /></div>
    </div>
    <div className="ml-[4px] flex h-full gap-1">
      {apps.map((a, i) => (
        <div
          key={i}
          className={
            a.active
              ? "relative my-[3px] flex h-10 w-10 items-center justify-center rounded border border-[#4d3a35] bg-[#452f2a]"
              : "relative my-[3px] flex h-10 w-10 items-center justify-center"
          }
        >
          <div className="relative flex h-6 w-6 items-center justify-center">
            {a.icon}
            {a.badge}
          </div>
          {a.active && <div className="absolute -bottom-px h-[3px] w-4 rounded-full bg-[#d69be0]" />}
          {a.running && <div className="absolute bottom-0 h-[3px] w-1.5 rounded-full bg-[#9c9390]" />}
        </div>
      ))}
    </div>
    <div className="ml-auto flex items-center pr-[19px]">
      <ChevronUp className="h-4 w-4" strokeWidth={2} />
      <svg viewBox="0 0 17 14" className="ml-[16px] h-[14px] w-[17px]">
        <circle cx="9" cy="5" r="4.500" fill="#b9b3b1" />
        <path d="M3.500 12a3.500 3.500 0 0 1 0-6.500A4.500 4.500 0 0 1 10 8v4z" fill="#e4e0df" />
        <circle cx="12" cy="9" r="4.700" fill="#77797c" />
        <path d="M10.700 7v4M13.300 7v4" stroke="#fff" strokeWidth="1" />
      </svg>
      <div className="ml-[13px] w-8 text-center leading-4"><div>ENG</div><div>IN</div></div>
      <svg viewBox="0 0 17 14" className="ml-[13px] h-[14px] w-[17px]" fill="none" stroke="#fff" strokeWidth="1.200">
        <path d="M1 5.500a10.500 10.500 0 0 1 15 0M3.500 8a7 7 0 0 1 10 0M5.700 10.200a4 4 0 0 1 5.600 0" />
        <circle cx="8.500" cy="12" r="1.300" fill="#fff" stroke="none" />
      </svg>
      <svg viewBox="0 0 17 14" className="ml-[7px] h-[14px] w-[17px]" fill="none" stroke="#fff" strokeWidth="1.100">
        <path d="M1 5h2.500L7 2v10.500L3.500 9.500H1zM9 5.200a3 3 0 0 1 0 4M11 3.500a5.500 5.500 0 0 1 0 7.500" />
        <path d="M13.200 1.700a8.500 8.500 0 0 1 0 11" stroke="#806f6a" />
      </svg>
      <svg viewBox="0 0 17 14" className="ml-[7px] h-[14px] w-[17px]">
        <rect x="1.500" y="4" width="13" height="8.500" rx="1.800" fill="none" stroke="#fff" strokeWidth="1.100" />
        <path d="M3.500 9 7 6h6v5H3.500zM15 6.500h1.500v3.500H15z" fill="#fff" />
        <path d="M3.500 0 .5 4.500h2L1.500 8l4-5h-2L5 0z" fill="#fff" stroke="#381c14" strokeWidth=".5" />
      </svg>
      <div className="ml-[16px] w-[64px] whitespace-nowrap text-right leading-4 tracking-normal"><div>23:50:17</div><div>29-05-2025</div></div>
    </div>
  </div>
);

export default function App() {
  return (
    <div className="flex h-[1080px] w-[1920px] flex-col overflow-hidden bg-[#12212d] font-['Open_Sans','Noto_Sans',sans-serif]">
      <TabStrip />
      <Toolbar />
      <BookmarksBar />
      <Site />
      <Taskbar />
    </div>
  );
}
